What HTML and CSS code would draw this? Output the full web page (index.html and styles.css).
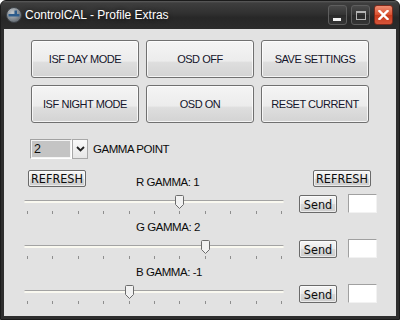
FILE: index.html
```html
<!DOCTYPE html>
<html lang="en">
<head>
    <meta charset="UTF-8">
    <title>ControlCAL - Profile Extras</title>
    <link rel="stylesheet" href="styles.css">
</head>
<body>
    <div class="window">
        <div class="titlebar">
            <svg class="app-icon" width="16" height="16" viewBox="0 0 16 16">
                <defs>
                    <radialGradient id="iconFill" cx="40%" cy="35%" r="70%">
                        <stop offset="0" stop-color="#c4cace"/>
                        <stop offset="1" stop-color="#5d646c"/>
                    </radialGradient>
                </defs>
                <circle cx="8" cy="8" r="7.5" fill="url(#iconFill)" stroke="#3b3f44"/>
                <rect x="2.5" y="7" width="11" height="2.5" fill="#2d5c8c"/>
                <rect x="8.5" y="3.5" width="2.5" height="5" fill="#2d5c8c"/>
            </svg>
            <span class="title">ControlCAL - Profile Extras</span>
            <div class="caption-buttons">
                <span class="cap-btn cap-min"><i></i></span>
                <span class="cap-btn cap-max"><i></i></span>
                <span class="cap-btn cap-close">
                    <svg width="11" height="10" viewBox="0 0 11 10">
                        <path d="M1.5 1 L9.5 9 M9.5 1 L1.5 9" stroke="#fff" stroke-width="2.4" stroke-linecap="square"/>
                    </svg>
                </span>
            </div>
        </div>
        <div class="client">
            <div class="mode-grid">
                <button class="mode-btn">ISF DAY MODE</button>
                <button class="mode-btn">OSD OFF</button>
                <button class="mode-btn">SAVE SETTINGS</button>
                <button class="mode-btn">ISF NIGHT MODE</button>
                <button class="mode-btn">OSD ON</button>
                <button class="mode-btn">RESET CURRENT</button>
            </div>

            <div class="gamma-point">
                <div class="select">
                    <span class="select-value">2</span>
                    <span class="select-arrow">
                        <svg width="9" height="6" viewBox="0 0 9 6">
                            <path d="M1 1 L4.5 4.5 L8 1" fill="none" stroke="#222" stroke-width="1.8"/>
                        </svg>
                    </span>
                </div>
                <span class="field-label">GAMMA POINT</span>
            </div>

            <div class="channel">
                <div class="channel-head">
                    <button class="small-btn">REFRESH</button>
                    <span class="channel-label">R GAMMA: 1</span>
                    <button class="small-btn refresh-right">REFRESH</button>
                </div>
                <div class="slider-row">
                    <div class="slider" style="--v: 1">
                        <div class="track"></div>
                        <div class="ticks"><i></i><i></i><i></i><i></i><i></i><i></i><i></i><i></i><i></i><i></i><i></i></div>
                        <svg class="thumb" width="9" height="14" viewBox="0 0 9 14">
                            <path d="M1.5 0.5 H7.5 Q8.5 0.5 8.5 1.5 V9.5 L4.5 13.5 L0.5 9.5 V1.5 Q0.5 0.5 1.5 0.5 Z" fill="#f1f1f1" stroke="#6c6c6c"/>
                        </svg>
                    </div>
                    <button class="small-btn send-btn">Send</button>
                    <input class="value-box" type="text">
                </div>
            </div>

            <div class="channel">
                <div class="channel-head">
                    <span class="channel-label">G GAMMA: 2</span>
                </div>
                <div class="slider-row">
                    <div class="slider" style="--v: 2">
                        <div class="track"></div>
                        <div class="ticks"><i></i><i></i><i></i><i></i><i></i><i></i><i></i><i></i><i></i><i></i><i></i></div>
                        <svg class="thumb" width="9" height="14" viewBox="0 0 9 14">
                            <path d="M1.5 0.5 H7.5 Q8.5 0.5 8.5 1.5 V9.5 L4.5 13.5 L0.5 9.5 V1.5 Q0.5 0.5 1.5 0.5 Z" fill="#f1f1f1" stroke="#6c6c6c"/>
                        </svg>
                    </div>
                    <button class="small-btn send-btn">Send</button>
                    <input class="value-box" type="text">
                </div>
            </div>

            <div class="channel">
                <div class="channel-head">
                    <span class="channel-label">B GAMMA: -1</span>
                </div>
                <div class="slider-row">
                    <div class="slider" style="--v: -1">
                        <div class="track"></div>
                        <div class="ticks"><i></i><i></i><i></i><i></i><i></i><i></i><i></i><i></i><i></i><i></i><i></i></div>
                        <svg class="thumb" width="9" height="14" viewBox="0 0 9 14">
                            <path d="M1.5 0.5 H7.5 Q8.5 0.5 8.5 1.5 V9.5 L4.5 13.5 L0.5 9.5 V1.5 Q0.5 0.5 1.5 0.5 Z" fill="#f1f1f1" stroke="#6c6c6c"/>
                        </svg>
                    </div>
                    <button class="small-btn send-btn">Send</button>
                    <input class="value-box" type="text">
                </div>
            </div>
        </div>
    </div>
</body>
</html>
```

FILE: styles.css
```css
body {
    margin: 0;
    background-color: #ffffff;
    font-family: "Liberation Sans", Arial, sans-serif;
}
.window {
    width: 400px;
    height: 320px;
    box-sizing: border-box;
    border: 1px solid #1b1b1b;
    border-radius: 6px 6px 0 0;
    background-color: #2e2e2e;
    display: flex;
    flex-direction: column;
    overflow: hidden;
}
.titlebar {
    height: 28px;
    flex: none;
    display: flex;
    align-items: center;
    padding: 0 6px 0 5px;
    background: linear-gradient(#5c5c5c 0, #3e3e3e 2px, #303030 45%, #272727 60%, #2c2c2c 100%);
}
.app-icon {
    display: block;
    flex: none;
}
.title {
    margin-left: 3px;
    font-size: 12px;
    color: #ffffff;
    text-shadow: 0 0 4px rgba(0, 0, 0, 0.6);
}
.caption-buttons {
    margin-left: auto;
    display: flex;
    gap: 4px;
}
.cap-btn {
    width: 19px;
    height: 20px;
    box-sizing: border-box;
    border: 1px solid #5e5e5e;
    border-radius: 3px;
    background: linear-gradient(#4a4a4a, #333333 50%, #2a2a2a 51%, #353535);
    display: flex;
    align-items: center;
    justify-content: center;
    position: relative;
}
.cap-min i {
    position: absolute;
    left: 4px;
    top: 12px;
    width: 8px;
    height: 3px;
    background-color: #f4f4f4;
}
.cap-max i {
    width: 10px;
    height: 9px;
    box-sizing: border-box;
    border: 1px solid #b4b4b4;
    border-top-width: 2px;
}
.cap-close {
    border-color: #7e2a1c;
    background: linear-gradient(#ee8d72, #d9502f 50%, #c63a1c 51%, #d6553a);
}
.cap-close svg {
    display: block;
}
.client {
    flex: 1;
    margin: 0 3px 3px;
    background-color: #e2e2e2;
    font-size: 11px;
    letter-spacing: -0.45px;
    color: #0c0c0c;
}
button {
    font: inherit;
    letter-spacing: inherit;
    color: inherit;
    padding: 0;
    cursor: pointer;
}
.mode-grid {
    margin: 11px 0 0 27px;
    display: grid;
    grid-template-columns: repeat(3, 108px);
    grid-auto-rows: 38px;
    gap: 7px;
}
.mode-btn {
    color: #14142a;
    border: 1px solid #707070;
    border-radius: 3px;
    background: linear-gradient(#f4f4f4 0%, #ececec 55%, #dedede 60%, #d3d3d3 100%);
    box-shadow: inset 0 0 0 1px rgba(255, 255, 255, 0.75);
}
.gamma-point {
    margin: 16px 0 0 26px;
    height: 20px;
    display: flex;
    align-items: center;
    gap: 5px;
}
.select {
    width: 58px;
    height: 20px;
    display: flex;
}
.select-value {
    width: 42px;
    box-sizing: border-box;
    border: 1px solid;
    border-color: #a2a2a2 #ffffff #ffffff #a2a2a2;
    box-shadow: inset 0 0 0 1px #f4f4f4;
    background-color: #c4c4c4;
    padding: 2px 0 0 3px;
    font-size: 12.5px;
}
.select-arrow {
    width: 16px;
    box-sizing: border-box;
    border: 1px solid #a8a8a8;
    background: linear-gradient(#fafafa, #e6e6e6);
    display: flex;
    align-items: center;
    justify-content: center;
}
.select-arrow svg {
    display: block;
}
.field-label {
    font-size: 11.5px;
}
.channel-head {
    height: 20px;
    display: flex;
    align-items: center;
    padding: 0 25px 0 24px;
}
.gamma-point + .channel {
    margin-top: 11px;
}
.channel-label {
    margin-left: 108px;
    padding-top: 3px;
    font-size: 11.5px;
}
.small-btn + .channel-label {
    margin-left: 50px;
}
.small-btn {
    height: 17px;
    box-sizing: border-box;
    border: 1px solid #6a6a6a;
    border-radius: 2px;
    background: linear-gradient(#f6f6f6, #e8e8e8 50%, #d8d8d8 51%, #cdcdcd);
    box-shadow: inset 0 0 0 1px rgba(255, 255, 255, 0.6);
    font-family: "Liberation Sans Narrow", "DejaVu Sans Condensed", "Liberation Sans", sans-serif;
    font-size: 12.5px;
    letter-spacing: 0;
}
.channel-head .small-btn {
    align-self: flex-start;
    width: 58px;
}
.refresh-right {
    margin-left: auto;
}
.slider-row {
    height: 25px;
    display: flex;
    align-items: flex-start;
    padding-left: 20px;
}
.slider {
    position: relative;
    width: 260px;
    height: 25px;
}
.track {
    position: absolute;
    left: 0;
    right: 0;
    top: 10px;
    height: 3px;
    box-sizing: border-box;
    border-top: 1px solid #a3a3a3;
    border-radius: 2px;
    background-color: #faf9f0;
}
.ticks {
    position: absolute;
    left: 3px;
    width: 255px;
    top: 21px;
    height: 3px;
    display: flex;
    justify-content: space-between;
}
.ticks i {
    width: 1px;
    background-color: #8e8e8e;
}
.thumb {
    position: absolute;
    top: 5px;
    left: calc(3px + (var(--v) + 5) * 25.4px - 4px);
    display: block;
}
.send-btn {
    margin: 5px 0 0 15px;
    width: 38px;
    height: 18px;
}
.value-box {
    margin: 4px 0 0 11px;
    width: 29px;
    height: 19px;
    box-sizing: border-box;
    border: 1px solid;
    border-color: #a0a0a0 #f2f2f2 #f2f2f2 #a0a0a0;
    background-color: #ffffff;
    padding: 0;
}
```
